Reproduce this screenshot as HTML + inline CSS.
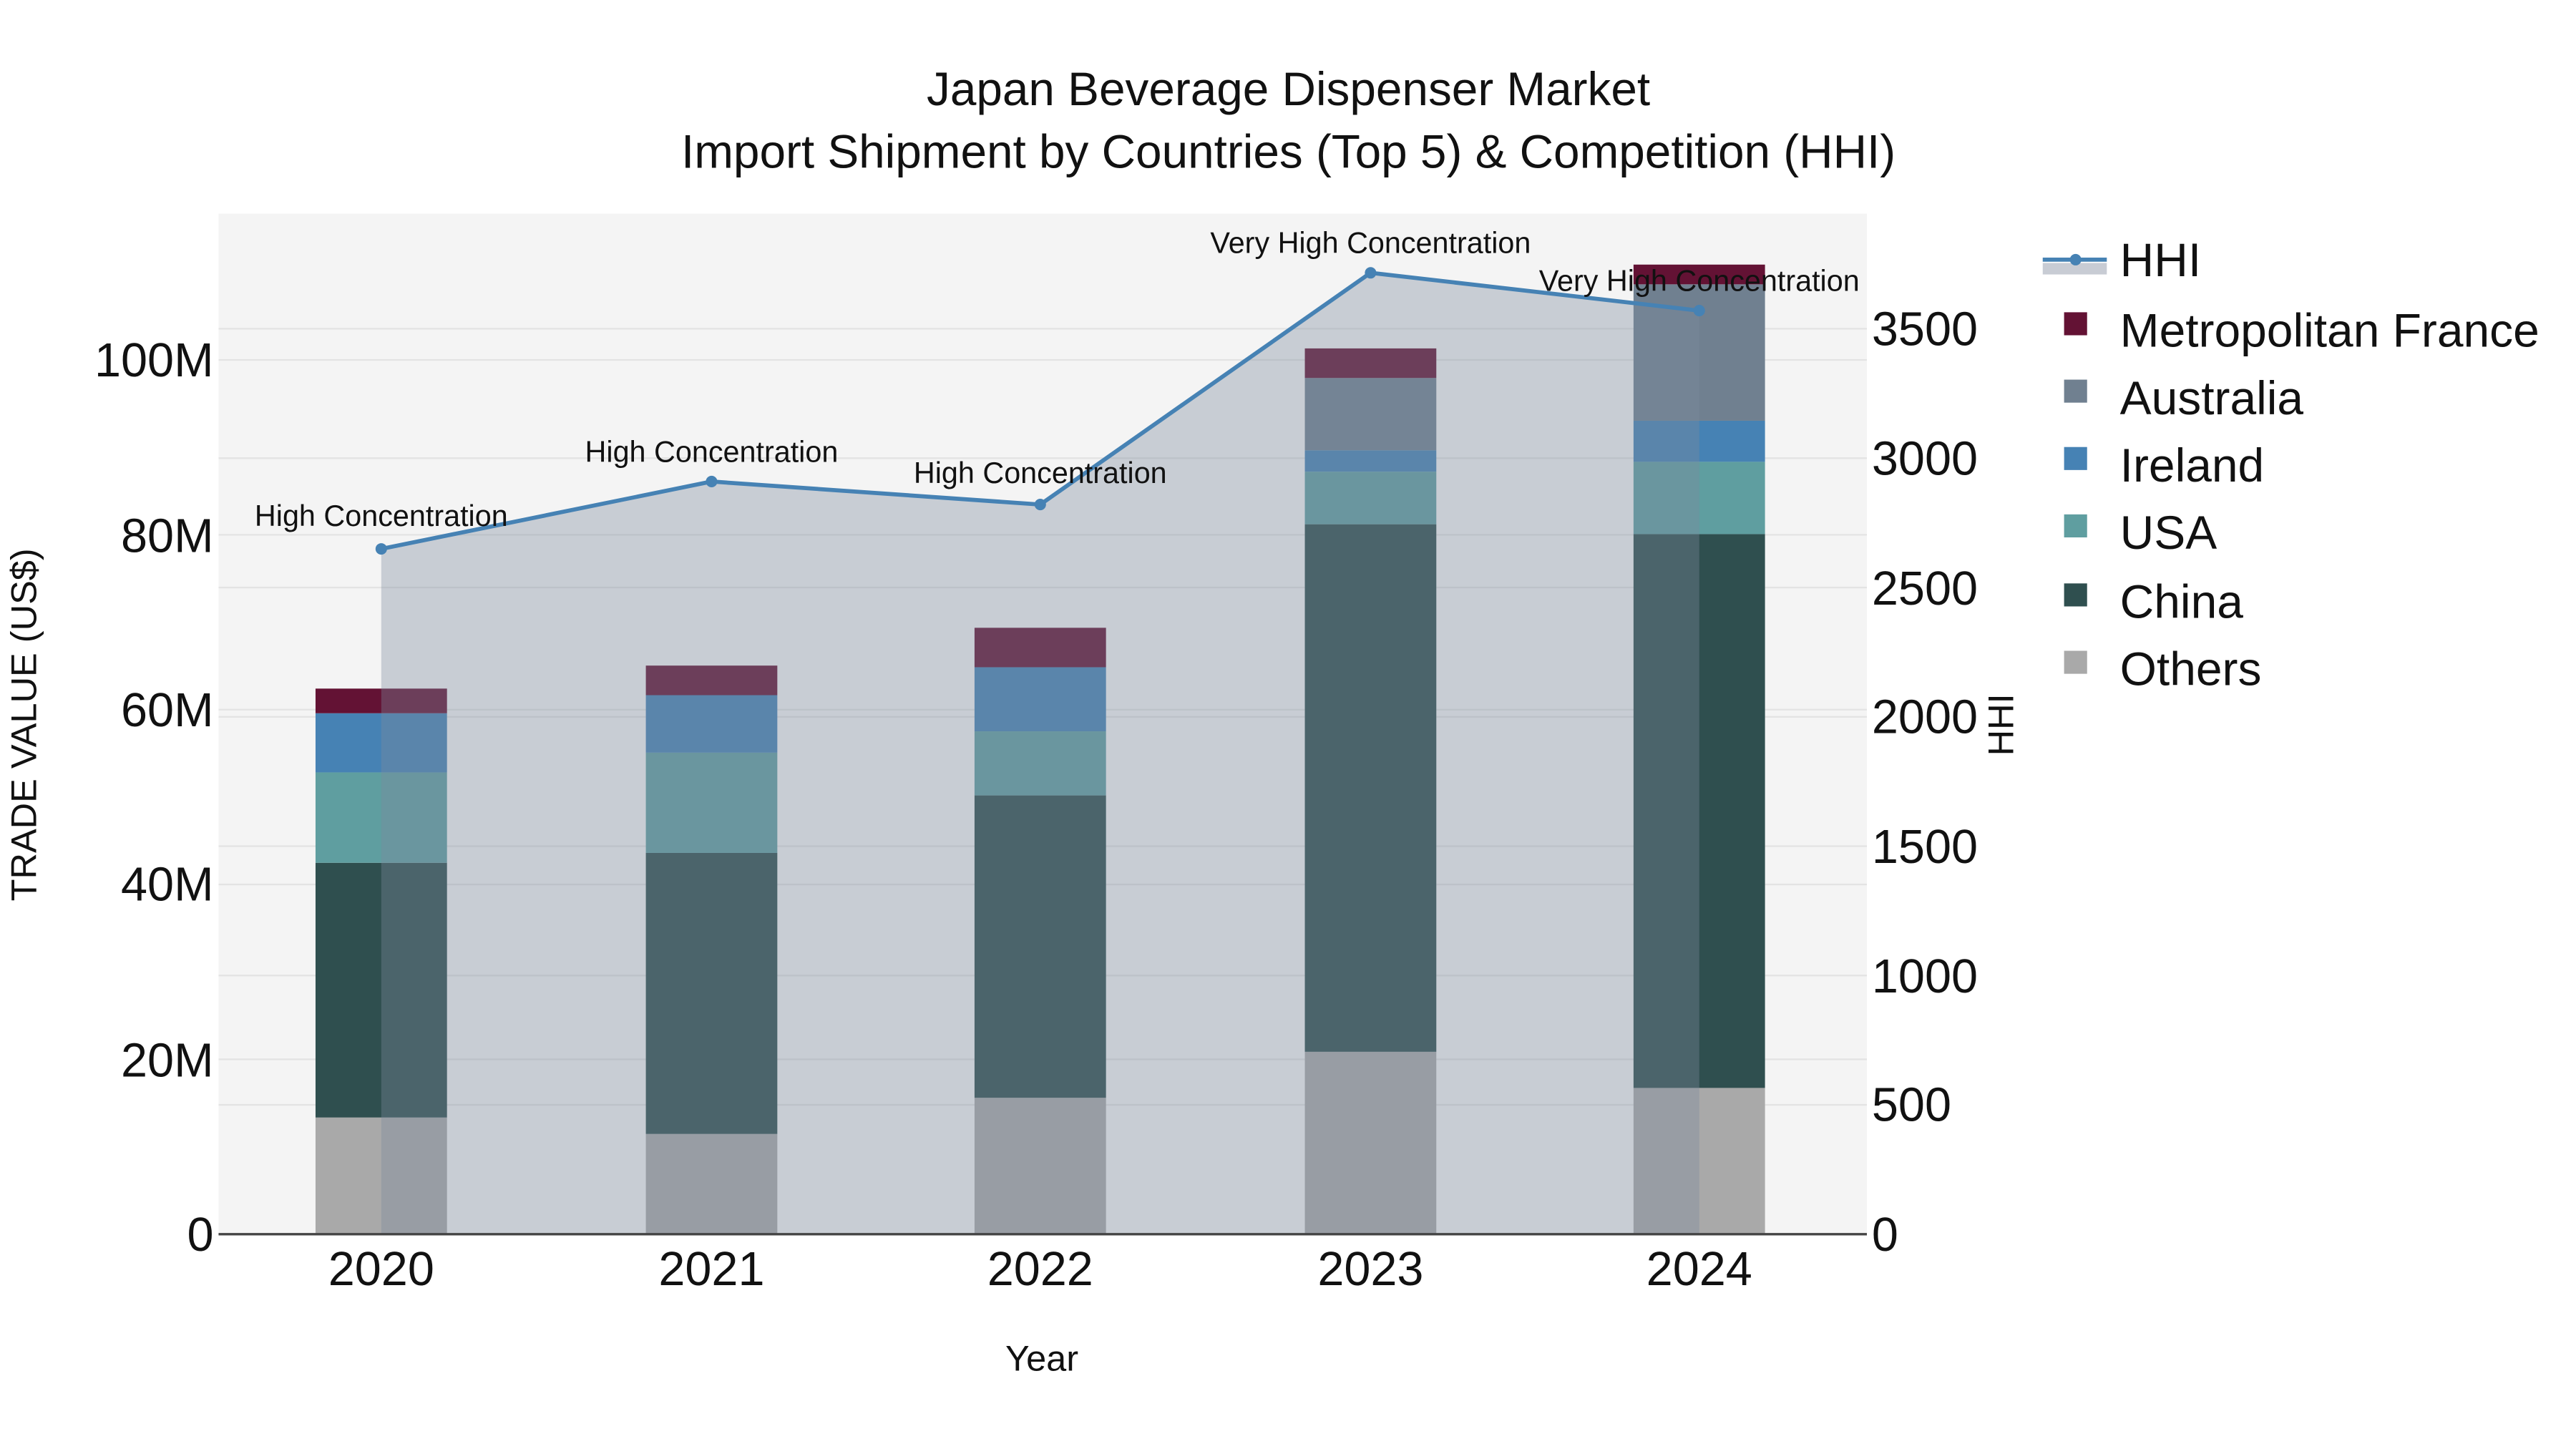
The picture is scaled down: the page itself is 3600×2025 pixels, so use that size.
<!DOCTYPE html>
<html><head><meta charset="utf-8"><style>
html,body{margin:0;padding:0;background:#fff;}
svg{display:block;}
text{font-family:"Liberation Sans",Arial,sans-serif;fill:#111;}
</style></head><body>
<svg width="3600" height="2025" viewBox="0 0 1567.5 881.7" xmlns="http://www.w3.org/2000/svg">
<rect x="0" y="0" width="1567.5" height="881.7" fill="#fff"/>
<rect x="133" y="130" width="1003" height="621" fill="#f4f4f4"/>
<g stroke="#e3e3e3" stroke-width="1">
<line x1="133" x2="1136" y1="644.6" y2="644.6"/><line x1="133" x2="1136" y1="538.2" y2="538.2"/>
<line x1="133" x2="1136" y1="431.8" y2="431.8"/><line x1="133" x2="1136" y1="325.4" y2="325.4"/>
<line x1="133" x2="1136" y1="219" y2="219"/>
<line x1="133" x2="1136" y1="672.3" y2="672.3"/><line x1="133" x2="1136" y1="593.6" y2="593.6"/>
<line x1="133" x2="1136" y1="514.9" y2="514.9"/><line x1="133" x2="1136" y1="436.2" y2="436.2"/>
<line x1="133" x2="1136" y1="357.5" y2="357.5"/><line x1="133" x2="1136" y1="278.8" y2="278.8"/>
<line x1="133" x2="1136" y1="200" y2="200"/>
</g>
<g>
<rect x="192" y="680" width="80" height="71" fill="#a9a9a9"/>
<rect x="192" y="525" width="80" height="155" fill="#2f4f4f"/>
<rect x="192" y="470" width="80" height="55" fill="#5f9ea0"/>
<rect x="192" y="434" width="80" height="36" fill="#4682b4"/>
<rect x="192" y="419" width="80" height="15" fill="#631234"/>

<rect x="393" y="690" width="80" height="61" fill="#a9a9a9"/>
<rect x="393" y="519" width="80" height="171" fill="#2f4f4f"/>
<rect x="393" y="458" width="80" height="61" fill="#5f9ea0"/>
<rect x="393" y="423" width="80" height="35" fill="#4682b4"/>
<rect x="393" y="405" width="80" height="18" fill="#631234"/>

<rect x="593" y="668" width="80" height="83" fill="#a9a9a9"/>
<rect x="593" y="484" width="80" height="184" fill="#2f4f4f"/>
<rect x="593" y="445" width="80" height="39" fill="#5f9ea0"/>
<rect x="593" y="406" width="80" height="39" fill="#4682b4"/>
<rect x="593" y="382" width="80" height="24" fill="#631234"/>

<rect x="794" y="640" width="80" height="111" fill="#a9a9a9"/>
<rect x="794" y="319" width="80" height="321" fill="#2f4f4f"/>
<rect x="794" y="287" width="80" height="32" fill="#5f9ea0"/>
<rect x="794" y="274" width="80" height="13" fill="#4682b4"/>
<rect x="794" y="230" width="80" height="44" fill="#708090"/>
<rect x="794" y="212" width="80" height="18" fill="#631234"/>

<rect x="994" y="662" width="80" height="89" fill="#a9a9a9"/>
<rect x="994" y="325" width="80" height="337" fill="#2f4f4f"/>
<rect x="994" y="281" width="80" height="44" fill="#5f9ea0"/>
<rect x="994" y="256" width="80" height="25" fill="#4682b4"/>
<rect x="994" y="173" width="80" height="83" fill="#708090"/>
<rect x="994" y="161" width="80" height="12" fill="#631234"/>
</g>
<polygon points="232,751 232,334 433,293 633,307 834,166 1034,189 1034,751" fill="rgb(126,137,158)" fill-opacity="0.37"/>
<polyline points="232,334 433,293 633,307 834,166 1034,189" fill="none" stroke="#4682b4" stroke-width="2.5"/>
<g fill="#4682b4">
<circle cx="232" cy="334" r="3.5"/><circle cx="433" cy="293" r="3.5"/><circle cx="633" cy="307" r="3.5"/>
<circle cx="834" cy="166" r="3.5"/><circle cx="1034" cy="189" r="3.5"/>
</g>
<line x1="133" x2="1136" y1="751" y2="751" stroke="#444" stroke-width="1.5"/>
<g font-size="18" text-anchor="middle">
<text x="232" y="320">High Concentration</text>
<text x="433" y="281">High Concentration</text>
<text x="633" y="294">High Concentration</text>
<text x="834" y="154">Very High Concentration</text>
<text x="1034" y="177">Very High Concentration</text>
</g>
<g text-anchor="middle" font-size="28.6">
<text x="784" y="64">Japan Beverage Dispenser Market</text>
<text x="784" y="102">Import Shipment by Countries (Top 5) &amp; Competition (HHI)</text>
</g>
<g font-size="29" text-anchor="end">
<text x="130" y="761">0</text>
<text x="130" y="655">20M</text>
<text x="130" y="548">40M</text>
<text x="130" y="442">60M</text>
<text x="130" y="336">80M</text>
<text x="130" y="229">100M</text>
</g>
<g font-size="29" text-anchor="start">
<text x="1139" y="761">0</text>
<text x="1139" y="682">500</text>
<text x="1139" y="604">1000</text>
<text x="1139" y="525">1500</text>
<text x="1139" y="446">2000</text>
<text x="1139" y="368">2500</text>
<text x="1139" y="289">3000</text>
<text x="1139" y="210">3500</text>
</g>
<g font-size="29" text-anchor="middle">
<text x="232" y="782">2020</text><text x="433" y="782">2021</text><text x="633" y="782">2022</text>
<text x="834" y="782">2023</text><text x="1034" y="782">2024</text>
</g>
<text x="634" y="834" font-size="22" text-anchor="middle">Year</text>
<text transform="translate(22,441) rotate(-90)" font-size="22" text-anchor="middle">TRADE VALUE (US$)</text>
<text transform="translate(1225,441) rotate(-90)" font-size="22" text-anchor="middle">HHI</text>
<rect x="1243" y="160" width="39" height="7" fill="#c8ccd4"/>
<line x1="1243" x2="1282" y1="158" y2="158" stroke="#4682b4" stroke-width="2.5"/>
<circle cx="1263" cy="158" r="3.5" fill="#4682b4"/>
<g font-size="28.7">
<text x="1290" y="168">HHI</text>
<text x="1290" y="211">Metropolitan France</text>
<text x="1290" y="252">Australia</text>
<text x="1290" y="293">Ireland</text>
<text x="1290" y="334">USA</text>
<text x="1290" y="376">China</text>
<text x="1290" y="417">Others</text>
</g>
<rect x="1256" y="190" width="14" height="14" fill="#631234"/>
<rect x="1256" y="231" width="14" height="14" fill="#708090"/>
<rect x="1256" y="272" width="14" height="14" fill="#4682b4"/>
<rect x="1256" y="313" width="14" height="14" fill="#5f9ea0"/>
<rect x="1256" y="355" width="14" height="14" fill="#2f4f4f"/>
<rect x="1256" y="396" width="14" height="14" fill="#a9a9a9"/>
</svg>
</body></html>
